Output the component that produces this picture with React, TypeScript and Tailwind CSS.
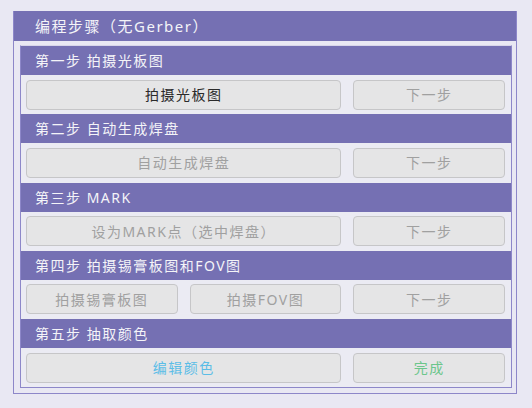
import React from "react";

type Btn = { label: string; tone: "dark" | "gray" | "blue" | "green"; span?: boolean };

const STEPS: { title: string; buttons: Btn[] }[] = [
  {
    title: "第一步 拍摄光板图",
    buttons: [
      { label: "拍摄光板图", tone: "dark", span: true },
      { label: "下一步", tone: "gray" },
    ],
  },
  {
    title: "第二步 自动生成焊盘",
    buttons: [
      { label: "自动生成焊盘", tone: "gray", span: true },
      { label: "下一步", tone: "gray" },
    ],
  },
  {
    title: "第三步 MARK",
    buttons: [
      { label: "设为MARK点（选中焊盘）", tone: "gray", span: true },
      { label: "下一步", tone: "gray" },
    ],
  },
  {
    title: "第四步 拍摄锡膏板图和FOV图",
    buttons: [
      { label: "拍摄锡膏板图", tone: "gray" },
      { label: "拍摄FOV图", tone: "gray" },
      { label: "下一步", tone: "gray" },
    ],
  },
  {
    title: "第五步 抽取颜色",
    buttons: [
      { label: "编辑颜色", tone: "blue", span: true },
      { label: "完成", tone: "green" },
    ],
  },
];

const toneClass = {
  dark: "text-[#2a2a2a]",
  gray: "text-[#a0a0a0]",
  blue: "text-[#5cbde6]",
  green: "text-[#6cc68c]",
};

export default function App() {
  return (
    <div
      className="w-[532px] h-[408px] bg-[#e9e8f3] pt-[11px] pl-[13px]"
      style={{ fontFamily: '"Noto Sans", "Noto Sans CJK SC", sans-serif' }}
    >
      <div className="w-[504px] h-[383px] border border-[#8d87c9] border-t-0 bg-[#e9e8f3] flex flex-col">
        <div className="h-[30px] bg-[#7570b3] flex items-center pl-[21px] text-[15px] tracking-[1.5px] text-[#f4f4f8]">
          编程步骤（无Gerber）
        </div>
        <div className="pt-[4px] pl-[6px] pr-[4px]">
          <div className="border border-[#8d87c9] border-t-[#d8d6ea]">
            {STEPS.map((step) => (
              <div key={step.title}>
                <div className="h-[29px] bg-[#7570b3] flex items-center pl-[14px] text-[14px] tracking-[1.5px] text-[#f4f4f8]">
                  {step.title}
                </div>
                <div className="h-[39.25px] grid grid-cols-3 gap-x-[12px] items-center pl-[5px] pr-[6px] bg-[#ebebf3]">
                  {step.buttons.map((b) => (
                    <button
                      key={b.label}
                      className={`h-[30px] rounded-[4px] border border-[#c6c6c8] bg-[#e5e5e6] text-[14px] tracking-[1.5px] flex items-center justify-center ${toneClass[b.tone]} ${b.span ? "col-span-2" : ""}`}
                    >
                      {b.label}
                    </button>
                  ))}
                </div>
              </div>
            ))}
          </div>
        </div>
      </div>
    </div>
  );
}
